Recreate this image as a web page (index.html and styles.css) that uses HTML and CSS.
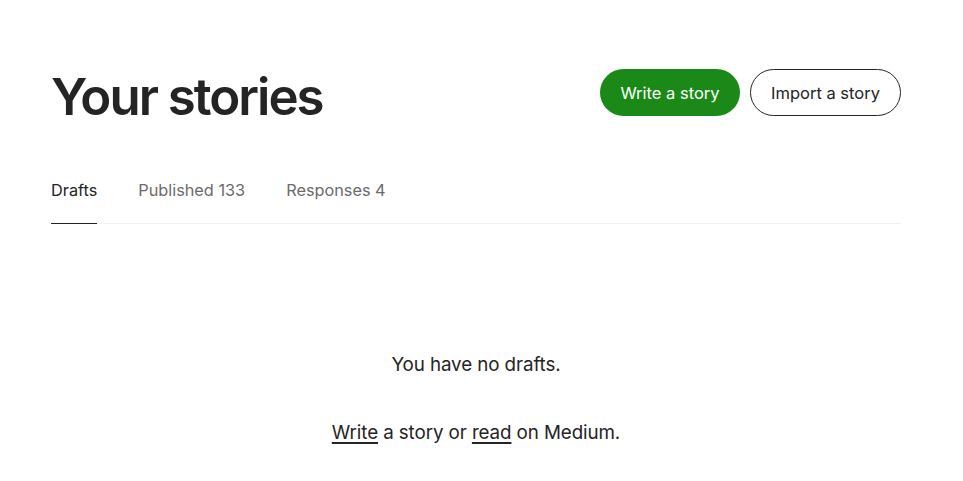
FILE: index.html
```html
<!DOCTYPE html>
<html lang="en">
<head>
<meta charset="utf-8">
<title>Your stories</title>
<link rel="stylesheet" href="styles.css">
</head>
<body>
<main class="page">
  <header class="head">
    <h1 class="title">Your stories</h1>
    <div class="actions">
      <a class="btn btn-primary" href="#">Write a story</a>
      <a class="btn btn-outline" href="#">Import a story</a>
    </div>
  </header>
  <nav class="tabs">
    <a class="tab tab-active" href="#">Drafts</a>
    <a class="tab" href="#">Published 133</a>
    <a class="tab" href="#">Responses 4</a>
  </nav>
  <section class="empty">
    <p class="empty-line">You have no drafts.</p>
    <p class="empty-line empty-links"><a href="#">Write</a> a story or <a href="#">read</a> on Medium.</p>
  </section>
</main>
</body>
</html>
```
FILE: styles.css
```css
* { box-sizing: border-box; }
html, body { margin: 0; padding: 0; background: #fff; }
body {
  font-family: Inter, "Noto Sans", sans-serif;
  color: #242424;
}
.page {
  width: 850px;
  margin-left: 51px;
  padding-top: 69px;
}
.head {
  display: flex;
  justify-content: space-between;
  align-items: flex-start;
}
.title {
  margin: 0;
  font-size: 51px;
  font-weight: 600;
  letter-spacing: -2px;
  line-height: 54px;
  padding-top: 1px;
  color: #242424;
}
.actions {
  display: flex;
  gap: 10px;
}
.btn {
  display: flex;
  align-items: center;
  justify-content: center;
  height: 47px;
  border-radius: 24px;
  font-size: 16.5px;
  text-decoration: none;
  letter-spacing: 0;
}
.btn-primary {
  width: 140px;
  background: #1a8917;
  color: #fff;
}
.btn-outline {
  width: 151px;
  border: 1px solid #242424;
  color: #242424;
}
.tabs {
  margin-top: 46px;
  display: flex;
  gap: 41px;
  border-bottom: 1px solid #f2f2f2;
}
.tab {
  font-size: 16.3px;
  color: #6b6b6b;
  text-decoration: none;
  padding: 10px 0 23px;
  letter-spacing: 0;
  margin-bottom: -1px;
  border-bottom: 1px solid transparent;
}
.tab-active {
  color: #242424;
  border-bottom-color: #242424;
}
.empty {
  text-align: center;
  padding-top: 127px;
}
.empty-line {
  margin: 0;
  font-size: 18.8px;
  line-height: 28px;
  letter-spacing: -0.1px;
}
.empty-links {
  margin-top: 40px;
}
.empty-links a {
  color: #242424;
  text-decoration: underline;
  text-decoration-thickness: 1.5px;
  text-underline-offset: 3px;
}
```
